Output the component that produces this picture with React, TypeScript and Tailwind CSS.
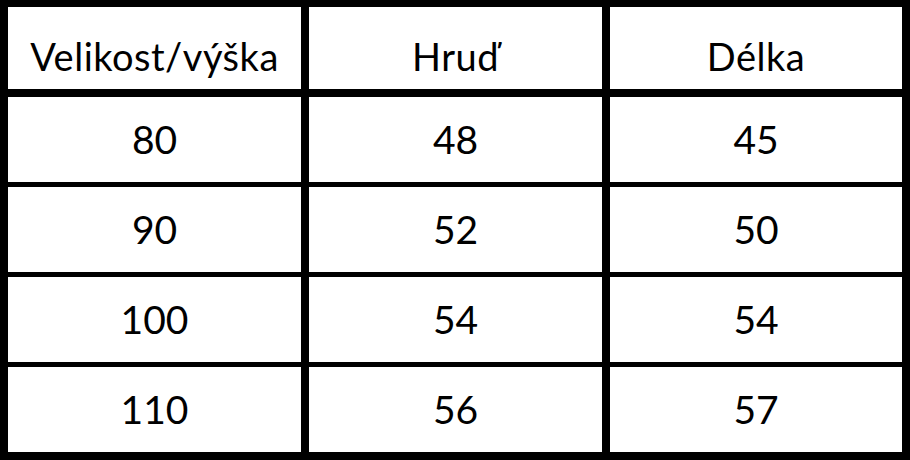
const header = ['Velikost/výška', 'Hruď', 'Délka'];

const rows = [
  ['80', '48', '45'],
  ['90', '52', '50'],
  ['100', '54', '54'],
  ['110', '56', '57'],
];

export default function App() {
  return (
    <div className="w-[910px] h-[460px] bg-black pt-[7px] pb-[8px] px-[8px] flex flex-col font-['Lato','Liberation_Sans',sans-serif] text-black">
      {/* header row */}
      <div className="grid grid-cols-[293px_293px_1fr] gap-x-[8px] h-[82px]">
        {header.map((h) => (
          <div key={h} className="bg-white flex items-center justify-center pt-[15px] text-[38px] tracking-[0.5px] leading-none">
            {h}
          </div>
        ))}
      </div>
      {rows.map((r, i) => (
        <div
          key={r[0]}
          className={`grid grid-cols-[293px_293px_1fr] gap-x-[8px] h-[85px] ${i === 0 ? 'mt-[8px]' : 'mt-[5px]'}`}
        >
          {r.map((c, j) => (
            <div key={j} className="bg-white flex items-center justify-center text-[39px] leading-none">
              {c}
            </div>
          ))}
        </div>
      ))}
    </div>
  );
}
